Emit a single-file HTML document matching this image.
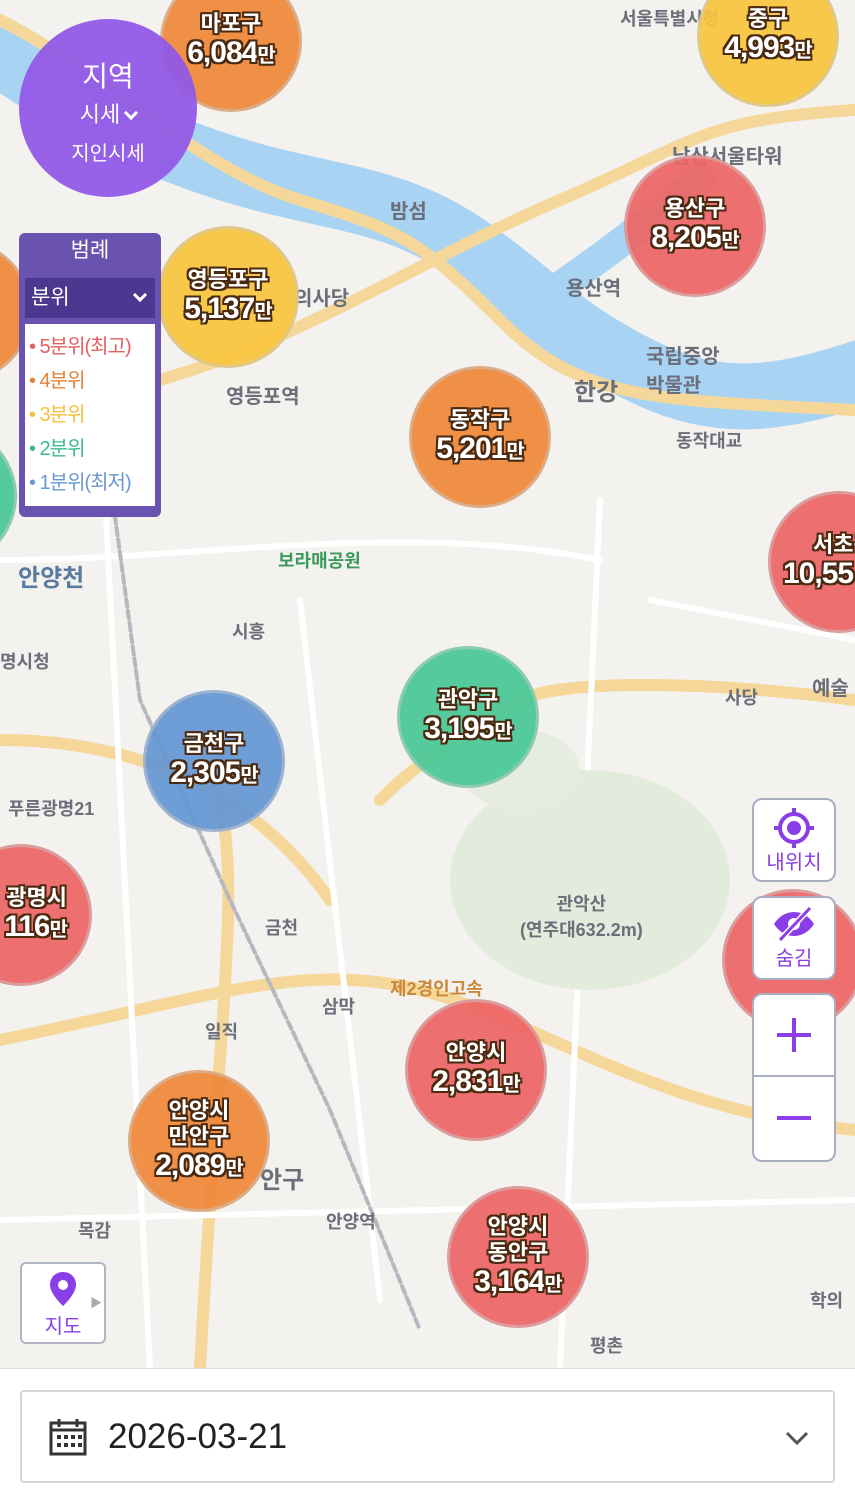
<!DOCTYPE html>
<html><head><meta charset="utf-8"><style>
*{margin:0;padding:0;box-sizing:border-box}
body{width:855px;height:1501px;overflow:hidden;font-family:"Liberation Sans","Noto Sans CJK KR",sans-serif;background:#fff;position:relative}
#map{position:absolute;left:0;top:0;width:855px;height:1368px;background:#f3f2ef;overflow:hidden}
.c{position:absolute;border-radius:50%;display:flex;flex-direction:column;align-items:center;justify-content:center;color:#fff;font-weight:bold;text-align:center;line-height:1.15;border:3px solid rgba(200,200,200,.5);
text-shadow:-2px -2px 0 #4a2a10,2px -2px 0 #4a2a10,-2px 2px 0 #4a2a10,2px 2px 0 #4a2a10,0 2px 0 #4a2a10,0 -2px 0 #4a2a10,2px 0 0 #4a2a10,-2px 0 0 #4a2a10}
.c .n{font-size:22px}.c .v{font-size:30px;letter-spacing:-1px}.c .v small{font-size:20px}
.o{background:rgba(240,135,55,.92)}.y{background:rgba(247,196,60,.92)}.r{background:rgba(238,100,100,.92)}.g{background:rgba(72,200,150,.92)}.b{background:rgba(100,150,210,.92)}
.lab{position:absolute;color:#6a6f7a;font-size:20px;font-weight:bold}
.btn{position:absolute;left:752px;width:84px;background:#fff;border:2px solid #a8aec0;border-radius:10px;color:#8a3ee8;display:flex;flex-direction:column;align-items:center;justify-content:center;font-size:20px}
.chev{display:inline-block;width:10px;height:10px;border-right:3px solid #fff;border-bottom:3px solid #fff;transform:rotate(45deg);position:relative;top:-4px}
</style></head><body>
<div id="map">
<svg width="855" height="1368" style="position:absolute;left:0;top:0">
<g fill="none" stroke-linecap="round">
<path d="M-20 40 C80 110 160 150 250 175 S400 200 470 250 S560 330 640 370 S780 400 870 370" stroke="#a9d3f2" stroke-width="66"/>
<path d="M540 300 C600 260 650 220 700 180" stroke="#a9d3f2" stroke-width="30"/>
<g stroke="#f5d79a" stroke-width="12">
<path d="M0 20 C100 70 200 170 300 200 S420 240 500 320 S650 400 855 410"/>
<path d="M160 380 C300 340 420 260 560 200 S700 120 855 110"/>
<path d="M0 1040 C200 1000 300 960 420 990 S650 1110 855 1130"/>
<path d="M380 800 C420 760 480 720 520 700 S700 680 855 700"/>
<path d="M0 740 C150 740 260 800 330 900"/>
<path d="M220 800 C240 900 220 1000 200 1368"/>
</g>
<g stroke="#ffffff" stroke-width="6">
<path d="M0 560 C200 560 400 520 600 560"/>
<path d="M100 400 L150 1368"/>
<path d="M300 600 L380 1300"/>
<path d="M600 500 L560 1368"/>
<path d="M0 1220 L855 1200"/>
<path d="M650 600 L855 640"/>
</g>
<path d="M110 480 L140 700 L230 900 L330 1110 L420 1330" stroke="#b6b8bd" stroke-width="4" stroke-dasharray="8 4"/>
</g>
<ellipse cx="590" cy="880" rx="140" ry="110" fill="#e3ebdc"/>
<ellipse cx="520" cy="770" rx="60" ry="40" fill="#e6ecdf"/>
</svg>
<div class="lab" style="left:390px;top:195px">밤섬</div>
<div class="lab" style="left:672px;top:140px">남산서울타워</div>
<div class="lab" style="left:566px;top:272px">용산역</div>
<div class="lab" style="left:646px;top:340px">국립중앙<br>박물관</div>
<div class="lab" style="left:574px;top:372px;font-size:24px">한강</div>
<div class="lab" style="left:676px;top:427px;font-size:18px">동작대교</div>
<div class="lab" style="left:294px;top:282px">의사당</div>
<div class="lab" style="left:226px;top:380px">영등포역</div>
<div class="lab" style="left:278px;top:547px;color:#3a9a5a;font-size:18px">보라매공원</div>
<div class="lab" style="left:18px;top:558px;font-size:24px;color:#5a7ba0">안양천</div>
<div class="lab" style="left:232px;top:618px;font-size:18px">시흥</div>
<div class="lab" style="left:0;top:648px;font-size:18px">명시청</div>
<div class="lab" style="left:725px;top:684px;font-size:18px">사당</div>
<div class="lab" style="left:812px;top:672px">예술</div>
<div class="lab" style="left:8px;top:795px;font-size:18px">푸른광명21</div>
<div class="lab" style="left:520px;top:890px;font-size:18px;text-align:center">관악산<br>(연주대632.2m)</div>
<div class="lab" style="left:265px;top:914px;font-size:18px">금천</div>
<div class="lab" style="left:322px;top:993px;font-size:18px">삼막</div>
<div class="lab" style="left:205px;top:1018px;font-size:18px">일직</div>
<div class="lab" style="left:390px;top:975px;color:#c9883a;font-size:18px">제2경인고속</div>
<div class="lab" style="left:260px;top:1160px;font-size:24px">안구</div>
<div class="lab" style="left:326px;top:1208px;font-size:18px">안양역</div>
<div class="lab" style="left:78px;top:1217px;font-size:18px">목감</div>
<div class="lab" style="left:590px;top:1332px;font-size:18px">평촌</div>
<div class="lab" style="left:810px;top:1287px;font-size:18px">학의</div>
<div class="lab" style="left:620px;top:5px;font-size:18px">서울특별시청</div>

<div class="c o" style="left:160px;top:-30px;width:142px;height:142px"><div class="n">마포구</div><div class="v">6,084<small>만</small></div></div>
<div class="c y" style="left:697px;top:-35px;width:142px;height:142px"><div class="n">중구</div><div class="v">4,993<small>만</small></div></div>
<div class="c r" style="left:624px;top:155px;width:142px;height:142px"><div class="n">용산구</div><div class="v">8,205<small>만</small></div></div>
<div class="c y" style="left:157px;top:226px;width:142px;height:142px"><div class="n">영등포구</div><div class="v">5,137<small>만</small></div></div>
<div class="c o" style="left:-110px;top:240px;width:142px;height:142px"></div>
<div class="c g" style="left:-125px;top:425px;width:142px;height:142px"></div>
<div class="c o" style="left:409px;top:366px;width:142px;height:142px"><div class="n">동작구</div><div class="v">5,201<small>만</small></div></div>
<div class="c r" style="left:768px;top:491px;width:142px;height:142px;align-items:flex-start;padding-left:12px"><div class="n" style="padding-left:30px">서초구</div><div class="v">10,55</div></div>
<div class="c g" style="left:397px;top:646px;width:142px;height:142px"><div class="n">관악구</div><div class="v">3,195<small>만</small></div></div>
<div class="c b" style="left:143px;top:690px;width:142px;height:142px"><div class="n">금천구</div><div class="v">2,305<small>만</small></div></div>
<div class="c r" style="left:-50px;top:844px;width:142px;height:142px;align-items:flex-end;padding-right:22px"><div class="n">광명시</div><div class="v">116<small>만</small></div></div>
<div class="c r" style="left:722px;top:889px;width:142px;height:142px"></div>
<div class="c r" style="left:405px;top:999px;width:142px;height:142px"><div class="n">안양시</div><div class="v">2,831<small>만</small></div></div>
<div class="c o" style="left:128px;top:1070px;width:142px;height:142px"><div class="n">안양시<br>만안구</div><div class="v">2,089<small>만</small></div></div>
<div class="c r" style="left:447px;top:1186px;width:142px;height:142px"><div class="n">안양시<br>동안구</div><div class="v">3,164<small>만</small></div></div>

<div style="position:absolute;left:19px;top:19px;width:178px;height:178px;border-radius:50%;background:rgba(145,90,230,.95);color:#fff;text-align:center">
<div style="font-size:28px;margin-top:36px">지역</div>
<div style="font-size:22px;margin-top:2px">시세 <span class="chev"></span></div>
<div style="font-size:20px;margin-top:8px">지인시세</div></div>

<div style="position:absolute;left:19px;top:233px;width:142px;height:284px;background:#6a52b0;border-radius:6px;padding:3px 6px">
<div style="color:#fff;text-align:center;font-size:21px;height:42px;line-height:30px">범례</div>
<div style="background:#4b3890;color:#fff;font-size:21px;height:40px;line-height:40px;padding-left:6px;position:relative">분위<span class="chev" style="position:absolute;right:10px;top:12px"></span></div>
<div style="background:#fff;margin-top:6px;height:182px;padding:6px 4px;font-size:20px;line-height:34px;letter-spacing:-1px">
<div style="color:#e26060">• 5분위(최고)</div><div style="color:#e0823a">• 4분위</div><div style="color:#f4c040">• 3분위</div><div style="color:#3cba8a">• 2분위</div><div style="color:#6a98d0">• 1분위(최저)</div></div></div>

<div class="btn" style="top:798px;height:84px">
<svg width="44" height="44" viewBox="0 0 44 44"><circle cx="22" cy="22" r="14" fill="none" stroke="#8a3ee8" stroke-width="4"/><circle cx="22" cy="22" r="7" fill="#8a3ee8"/><path d="M22 2v8M22 34v8M2 22h8M34 22h8" stroke="#8a3ee8" stroke-width="4"/></svg>
<div style="margin-top:-4px">내위치</div></div>
<div class="btn" style="top:896px;height:84px">
<svg width="48" height="36" viewBox="0 0 48 36"><path d="M4 18 C14 2 34 2 44 18 C34 34 14 34 4 18Z" fill="#8a3ee8"/><circle cx="24" cy="18" r="6" fill="#fff"/><path d="M10 34 L40 2" stroke="#fff" stroke-width="6"/><path d="M10 34 L40 2" stroke="#8a3ee8" stroke-width="3"/></svg>
<div>숨김</div></div>
<div class="btn" style="top:993px;height:169px;justify-content:flex-start">
<div style="height:82px;width:100%;border-bottom:2px solid #a8aec0;display:flex;align-items:center;justify-content:center"><svg width="38" height="38"><path d="M19 2v34M2 19h34" stroke="#8a3ee8" stroke-width="4"/></svg></div>
<div style="height:82px;display:flex;align-items:center;justify-content:center"><svg width="38" height="38"><path d="M2 19h34" stroke="#8a3ee8" stroke-width="4"/></svg></div></div>

<div style="position:absolute;left:20px;top:1262px;width:86px;height:82px;background:#fff;border:2px solid #b0b5c4;border-radius:6px;text-align:center;color:#8a3ee8;font-size:20px">
<svg width="30" height="38" viewBox="0 0 30 38" style="margin-top:6px"><path d="M15 2C7 2 2 8 2 15c0 9 13 21 13 21s13-12 13-21C28 8 23 2 15 2z" fill="#8a3ee8"/><circle cx="15" cy="15" r="5" fill="#fff"/></svg>
<div style="margin-top:-4px">지도</div><span style="position:absolute;right:2px;top:30px;color:#aaa;font-size:12px">▶</span></div>
</div>

<div style="position:absolute;left:0;top:1368px;width:855px;height:133px;background:#fff;border-top:1px solid #ddd">
<div style="position:absolute;left:20px;top:21px;width:815px;height:93px;border:2px solid #d6d6d6;border-radius:4px;display:flex;align-items:center">
<svg width="40" height="40" viewBox="0 0 40 40" style="margin-left:26px"><rect x="3" y="6" width="34" height="31" fill="none" stroke="#333" stroke-width="3"/><path d="M3 13h34M11 2v8M29 2v8" stroke="#333" stroke-width="3"/><g fill="#333"><rect x="9" y="18" width="4" height="4"/><rect x="16" y="18" width="4" height="4"/><rect x="23" y="18" width="4" height="4"/><rect x="30" y="18" width="4" height="4"/><rect x="9" y="26" width="4" height="4"/><rect x="16" y="26" width="4" height="4"/><rect x="23" y="26" width="4" height="4"/><rect x="30" y="26" width="4" height="4"/></g></svg>
<div style="font-size:35px;color:#222;margin-left:20px">2026-03-21</div>
<svg width="24" height="16" style="position:absolute;right:24px;top:38px"><path d="M2 3l10 10 10-10" fill="none" stroke="#555" stroke-width="3"/></svg>
</div></div>
</body></html>
